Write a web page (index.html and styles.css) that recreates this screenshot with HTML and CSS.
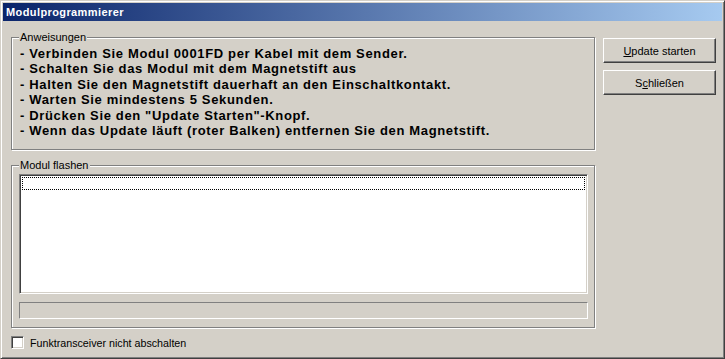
FILE: index.html
```html
<!DOCTYPE html>
<html lang="de">
<head>
  <meta charset="UTF-8">
  <title>Modulprogrammierer</title>
  <link rel="stylesheet" href="styles.css">
</head>
<body>
  <div class="window">
    <div class="titlebar">Modulprogrammierer</div>
    <div class="client">
      <div class="left">
        <div class="group group-info">
          <div class="group-title">Anweisungen</div>
          <div class="steps">
            <div>- Verbinden Sie Modul 0001FD per Kabel mit dem Sender.</div>
            <div>- Schalten Sie das Modul mit dem Magnetstift aus</div>
            <div>- Halten Sie den Magnetstift dauerhaft an den Einschaltkontakt.</div>
            <div>- Warten Sie mindestens 5 Sekunden.</div>
            <div>- Drücken Sie den "Update Starten"-Knopf.</div>
            <div>- Wenn das Update läuft (roter Balken) entfernen Sie den Magnetstift.</div>
          </div>
        </div>

        <div class="group group-flash">
          <div class="group-title">Modul flashen</div>
          <div class="listbox">
            <div class="list-item"></div>
          </div>
          <div class="progress"></div>
        </div>

        <label class="check-row">
          <span class="checkbox"></span>
          <span>Funktransceiver nicht abschalten</span>
        </label>
      </div>

      <div class="right">
        <button class="btn"><u>U</u>pdate starten</button>
        <button class="btn">S<u>c</u>hließen</button>
      </div>
    </div>
  </div>
</body>
</html>
```

FILE: styles.css
```css
body {
  margin: 0;
  background: #d4d0c8;
  font-family: 'Liberation Sans', Arial, sans-serif;
  font-size: 11px;
  color: #000;
}

.window {
  width: 725px;
  height: 359px;
  box-sizing: border-box;
  background: #d4d0c8;
  border: 1px solid;
  border-color: #d4d0c8 #404040 #404040 #d4d0c8;
  box-shadow: inset 1px 1px #fff, inset -1px -1px #808080;
  padding: 2px;
}

.titlebar {
  height: 18px;
  line-height: 18px;
  padding-left: 3px;
  background: linear-gradient(to right, #0a246a, #a6caf0);
  color: #fff;
  font-weight: bold;
  font-size: 11px;
  letter-spacing: 0.4px;
}

.client {
  display: flex;
  padding: 16px 0 0 8px;
}

.left {
  width: 584px;
}

.group {
  box-sizing: border-box;
  border: 1px solid #808080;
  box-shadow: inset 1px 1px #fff, 1px 1px #fff;
}

.group-title {
  width: fit-content;
  margin: -7px 0 0 7px;
  padding: 0 1px;
  line-height: 13px;
  background: #d4d0c8;
}

.group-info {
  height: 113px;
}

.steps {
  margin-top: 2px;
  padding-left: 8px;
  font-weight: bold;
  font-size: 13px;
  letter-spacing: 0.65px;
  line-height: 15.4px;
}

.group-flash {
  height: 163px;
  margin-top: 15px;
}

.listbox {
  height: 120px;
  box-sizing: border-box;
  margin: 2px 6px 0 7px;
  padding: 2px;
  background: #fff;
  border: 1px solid;
  border-color: #808080 #fff #fff #808080;
  box-shadow: inset 1px 1px #404040, inset -1px -1px #d4d0c8;
}

.list-item {
  height: 13px;
  box-sizing: border-box;
  border: 1px dotted #000;
}

.progress {
  height: 17px;
  box-sizing: border-box;
  margin: 8px 6px 0 7px;
  border: 1px solid;
  border-color: #808080 #fff #fff #808080;
}

.check-row {
  display: flex;
  align-items: center;
  gap: 6px;
  height: 13px;
  margin-top: 8px;
  font-size: 10.7px;
}

.checkbox {
  width: 13px;
  height: 13px;
  box-sizing: border-box;
  background: #fff;
  border: 1px solid;
  border-color: #808080 #fff #fff #808080;
  box-shadow: inset 1px 1px #404040, inset -1px -1px #d4d0c8;
}

.right {
  display: flex;
  flex-direction: column;
  gap: 7px;
  margin: 1px 0 0 8px;
}

.btn {
  width: 113px;
  height: 25px;
  padding: 0;
  background: #d4d0c8;
  border: 1px solid;
  border-color: #fff #404040 #404040 #fff;
  box-shadow: inset -1px -1px #808080;
  font-family: 'Liberation Sans', Arial, sans-serif;
  font-size: 11px;
  color: #000;
}
```
